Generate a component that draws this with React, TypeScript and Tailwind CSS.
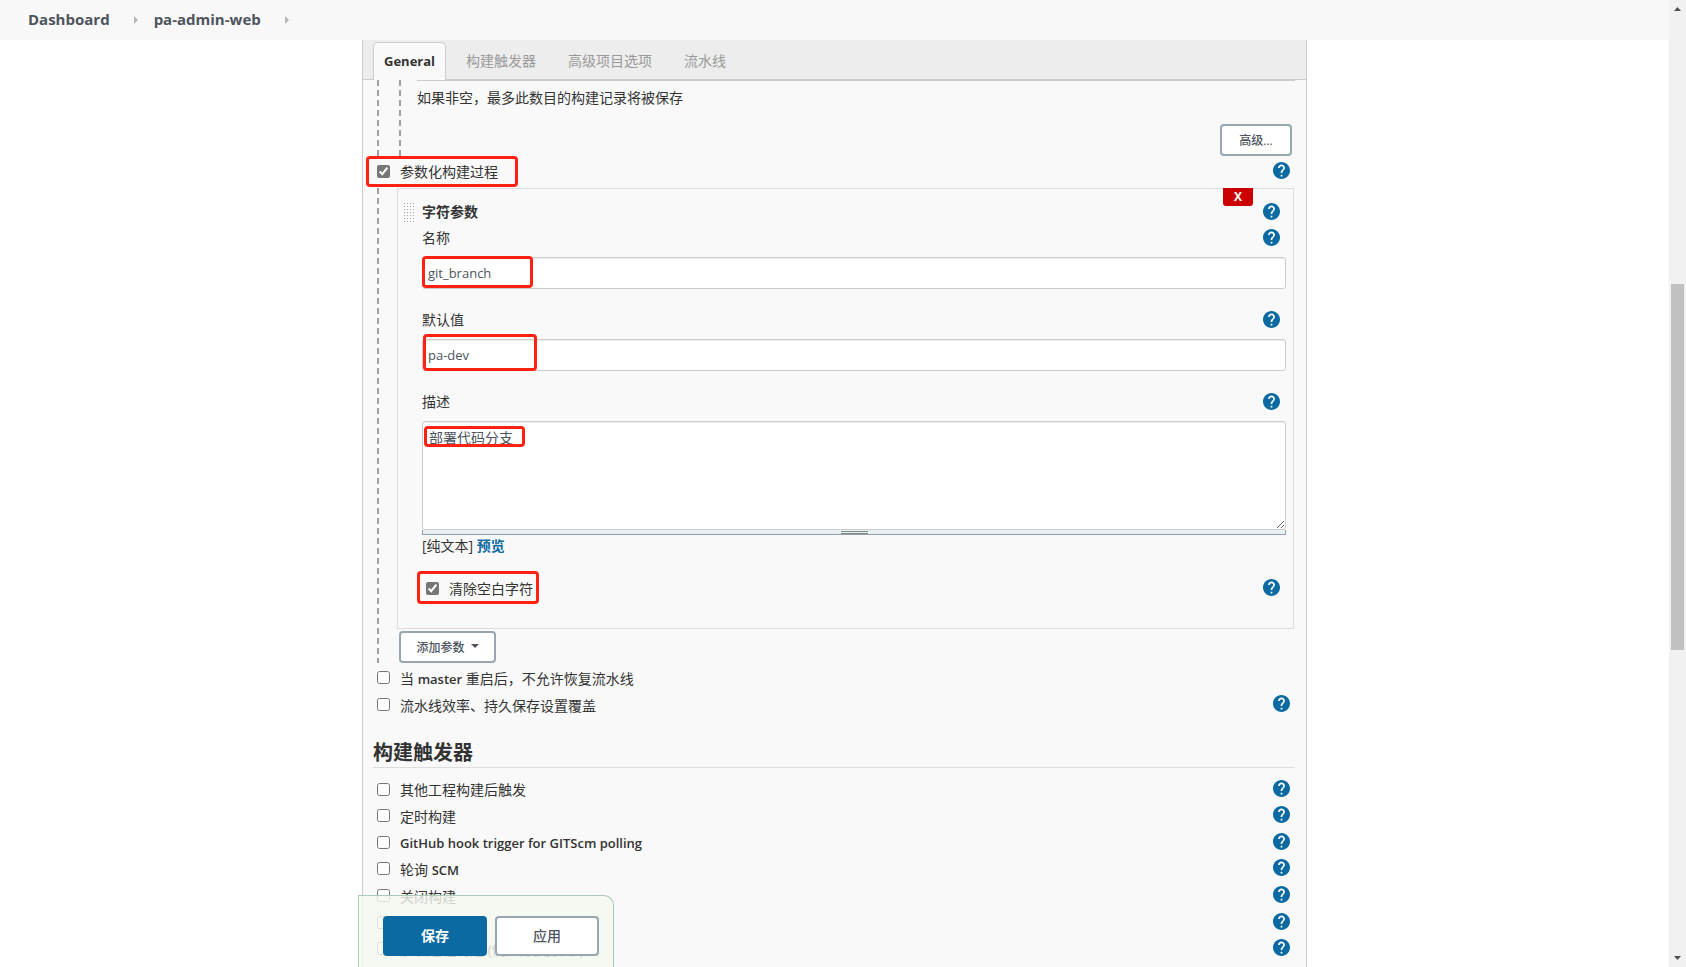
import React, { useId } from "react";

const DASH =
  "w-[2px] shrink-0 bg-[repeating-linear-gradient(to_bottom,#a0a0a0_0px,#a0a0a0_6px,transparent_6px,transparent_10px)]";

function Mark({ className }: { className: string }) {
  return (
    <span
      aria-hidden="true"
      className={`pointer-events-none absolute rounded-[4px] border-[3px] border-[#ff2213] ${className}`}
    />
  );
}

function Help({ topic }: { topic: string }) {
  return (
    <button type="button" aria-label={`帮助: ${topic}`} className="mb-[2px] ml-auto shrink-0">
      <svg viewBox="2 2 20 20" className="block size-[17px]" fill="#0b6aa2" aria-hidden="true">
        <circle cx="12" cy="12" r="9" fill="#fff" />
        <path d="M12 2C6.48 2 2 6.48 2 12s4.48 10 10 10 10-4.48 10-10S17.52 2 12 2zm1 17h-2v-2h2v2zm2.07-7.75l-.9.92C13.45 12.9 13 13.5 13 15h-2v-.5c0-1.1.45-2.1 1.17-2.83l1.24-1.26c.37-.36.59-.86.59-1.41 0-1.1-.9-2-2-2s-2 .9-2 2H8c0-2.21 1.79-4 4-4s4 1.79 4 4c0 .88-.36 1.68-.93 2.25z" />
      </svg>
    </button>
  );
}

function CheckRow({
  name,
  label,
  checked = false,
  help = true,
  className,
  children,
}: {
  name: string;
  label?: React.ReactNode;
  checked?: boolean;
  help?: boolean;
  className: string;
  children?: React.ReactNode;
}) {
  const id = useId();
  return (
    <div className={`relative flex items-center ${className}`}>
      <input id={id} type="checkbox" defaultChecked={checked} className="size-[13px] shrink-0 accent-[#767676]" />
      <label htmlFor={id} className="ml-[10px] pt-[2px] leading-5">
        {label ?? name}
      </label>
      {help && <Help topic={name} />}
      {children}
    </div>
  );
}

function FieldLabel({ id, text }: { id: string; text: string }) {
  return (
    <div className="flex h-[26px] items-center pr-[6px]">
      <label htmlFor={id} className="leading-5">
        {text}
      </label>
      <Help topic={text} />
    </div>
  );
}

const INPUT =
  "block h-8 w-full rounded-[3px] border border-[#ccc] bg-white px-[5px] text-[13px] text-[#4d545d] shadow-[inset_0_1px_1px_rgba(0,0,0,0.075)]";

function StringParameter() {
  return (
    <section className="relative mr-3 ml-[18px] border border-[#ddd] pt-[10px] pr-[7px] pb-[27px] pl-6">
      <button
        type="button"
        aria-label="删除"
        className="absolute -top-px right-[40px] h-[18px] w-[30px] rounded-b-[3px] bg-[#cc0000] text-xs leading-[18px] font-bold text-white"
      >
        X
      </button>
      <div className="-ml-[19px] flex h-[26px] items-center pr-[6px]">
        <span className="h-5 w-[12px] cursor-move bg-[radial-gradient(circle,#a8a8a0_1px,transparent_1px)] bg-[size:3px_3px]" />
        <h3 className="ml-[7px] leading-5 font-bold">字符参数</h3>
        <Help topic="字符参数" />
      </div>
      <FieldLabel id="param-name" text="名称" />
      <div className="relative mt-[6px]">
        <input id="param-name" type="text" defaultValue="git_branch" className={INPUT} />
        <Mark className="-top-px left-0 h-8 w-[111px]" />
      </div>
      <div className="mt-[18px]">
        <FieldLabel id="param-default" text="默认值" />
      </div>
      <div className="relative mt-[6px]">
        <input id="param-default" type="text" defaultValue="pa-dev" className={INPUT} />
        <Mark className="-top-[5px] left-px h-[37px] w-[114px]" />
      </div>
      <div className="mt-[18px]">
        <FieldLabel id="param-desc" text="描述" />
      </div>
      <div className="relative mt-[6px]">
        <textarea
          id="param-desc"
          defaultValue="部署代码分支"
          className="block h-[109px] w-full rounded-[3px] border border-[#ccc] bg-white px-[6px] pt-[6px] leading-5 text-[#4d545d] shadow-[inset_0_1px_1px_rgba(0,0,0,0.075)]"
        />
        <Mark className="top-[5px] left-[2px] h-[21px] w-[101px]" />
      </div>
      <div className="flex h-[5px] cursor-s-resize justify-center border-x border-b border-[#8fa0ad] bg-[#eaeff2]">
        <span className="mt-px h-[3px] w-[27px] border-y border-[#828c86]" />
      </div>
      <p className="mt-px leading-5">
        [纯文本]{" "}
        <a href="#preview" className="font-bold text-[#0b6aa2]">
          预览
        </a>
      </p>
      <CheckRow name="清除空白字符" checked className="mt-[19px] h-[26px] pr-[6px] pl-1">
        <Mark className="-top-1 -left-[5px] h-[33px] w-[122px]" />
      </CheckRow>
    </section>
  );
}

const TRIGGERS: { name: string; label?: React.ReactNode }[] = [
  { name: "其他工程构建后触发" },
  { name: "定时构建" },
  {
    name: "GitHub hook trigger for GITScm polling",
    label: <span className="text-[13px] font-semibold">GitHub hook trigger for GITScm polling</span>,
  },
  {
    name: "轮询 SCM",
    label: (
      <>
        轮询 <span className="text-[13px] font-semibold">SCM</span>
      </>
    ),
  },
  { name: "关闭构建" },
  { name: "静默期" },
  { name: "触发远程构建 (例如,使用脚本)" },
];

const OUTLINE = "rounded-[4px] border-2 border-[#98a6b1] bg-white font-medium text-[#4d545d]";

function Crumb({ children }: { children: string }) {
  return (
    <li className="flex items-center">
      <a href="#crumb">{children}</a>
      <svg viewBox="0 0 4 8" className="mr-4 ml-6 h-2 w-1" fill="#b5b5b5" aria-hidden="true">
        <path d="M0 0l4 4-4 4z" />
      </svg>
    </li>
  );
}

function ScrollBar() {
  return (
    <div aria-hidden="true" className="flex w-[17px] shrink-0 flex-col items-center bg-[#f1f1f1]">
      <svg viewBox="0 0 17 17" className="size-[17px] shrink-0" fill="#505050">
        <path d="M5 11h7L8.500 7z" />
      </svg>
      <div className="flex-[267]" />
      <div className="w-[13px] flex-[366] bg-[#c1c1c1]" />
      <div className="flex-[300]" />
      <svg viewBox="0 0 17 17" className="size-[17px] shrink-0" fill="#505050">
        <path d="M5 6h7l-3.500 4z" />
      </svg>
    </div>
  );
}

export default function App() {
  return (
    <div className="flex h-screen overflow-hidden bg-white font-['Open_Sans','Noto_Sans_CJK_SC',sans-serif] text-sm text-[#333]">
      <div className="flex min-w-0 flex-1 flex-col">
        <nav className="h-10 shrink-0 bg-[#f8f8f8] pl-7">
          <ol className="flex h-full items-center text-[15px] font-bold text-[#4d545d]">
            <Crumb>Dashboard</Crumb>
            <Crumb>pa-admin-web</Crumb>
          </ol>
        </nav>

        <form
          className="relative mx-auto flex min-h-0 w-full max-w-[945px] flex-1 flex-col border-x border-[#ccc] bg-[#f9f9f9]"
          onSubmit={(e) => e.preventDefault()}
        >
          <div role="tablist" className="flex h-10 shrink-0 items-end border-b border-[#ccc] bg-[#ededed] pl-[10px] text-[#999]">
            <button
              type="button"
              role="tab"
              aria-selected="true"
              className="-mb-px h-[38px] rounded-t-[5px] border border-b-0 border-[#ccc] bg-[#f9f9f9] px-[10px] text-[13px] font-bold text-[#333]"
            >
              General
            </button>
            <div className="flex h-[38px] gap-8 pt-px pl-5">
              <button type="button" role="tab" aria-selected="false">构建触发器</button>
              <button type="button" role="tab" aria-selected="false">高级项目选项</button>
              <button type="button" role="tab" aria-selected="false">流水线</button>
            </div>
          </div>

          <div className="min-h-0 flex-1 overflow-hidden">
            <div className="flex pl-[14px]">
              <div className={DASH} />
              <div className={`ml-5 ${DASH}`} />
              <div className="mr-[11px] ml-4 flex flex-1 flex-col border-t border-[#ccc]">
                <p className="mt-[7px] leading-5">如果非空，最多此数目的构建记录将被保存</p>
                <button type="button" className={`mt-4 mr-[3px] h-8 w-[72px] self-end pt-[2px] text-xs ${OUTLINE}`}>
                  高级...
                </button>
              </div>
            </div>

            <CheckRow name="参数化构建过程" checked className="mb-[2px] h-[30px] pr-4 pl-[14px]">
              <Mark className="top-0 left-[3px] h-[31px] w-[152px]" />
            </CheckRow>

            <div className="flex pl-[14px]">
              <div className={DASH} />
              <div className="flex-1">
                <StringParameter />
                <button
                  type="button"
                  className={`mt-[2px] ml-5 flex h-8 w-[97px] items-center justify-center gap-[6px] pt-[2px] text-xs ${OUTLINE}`}
                >
                  添加参数
                  <svg viewBox="0 0 8 4" className="mb-1 h-1 w-2" fill="#4d545d" aria-hidden="true">
                    <path d="M0 0h8L4 4z" />
                  </svg>
                </button>
              </div>
            </div>

            <div className="pt-px">
              <CheckRow
                name="当 master 重启后，不允许恢复流水线"
                label={
                  <>
                    当 <span className="text-[13px] font-semibold">master</span> 重启后，不允许恢复流水线
                  </>
                }
                help={false}
                className="h-[27px] pr-4 pl-[14px]"
              />
              <CheckRow name="流水线效率、持久保存设置覆盖" className="h-[27px] pr-4 pl-[14px]" />
            </div>

            <h2 className="mt-5 mr-[11px] ml-[10px] h-[30px] border-b border-[#ddd] text-xl leading-[29px] font-bold">
              构建触发器
            </h2>
            <div className="mt-2 grid h-[186px] auto-rows-fr">
              {TRIGGERS.map((t) => (
                <CheckRow key={t.name} name={t.name} label={t.label} className="pr-4 pl-[14px]" />
              ))}
            </div>
          </div>

          <div className="absolute bottom-0 -left-[5px] flex h-[72px] items-start gap-2 rounded-tr-[10px] border border-b-0 border-[#a9cbb9] bg-[#f5f8f0]/80 pt-5 pr-[14px] pl-6 text-sm">
            <button type="submit" className="h-10 w-[104px] rounded-[4px] bg-[#0b6aa2] font-bold text-white">
              保存
            </button>
            <button type="button" className={`h-10 w-[104px] ${OUTLINE}`}>
              应用
            </button>
          </div>
        </form>
      </div>
      <ScrollBar />
    </div>
  );
}
